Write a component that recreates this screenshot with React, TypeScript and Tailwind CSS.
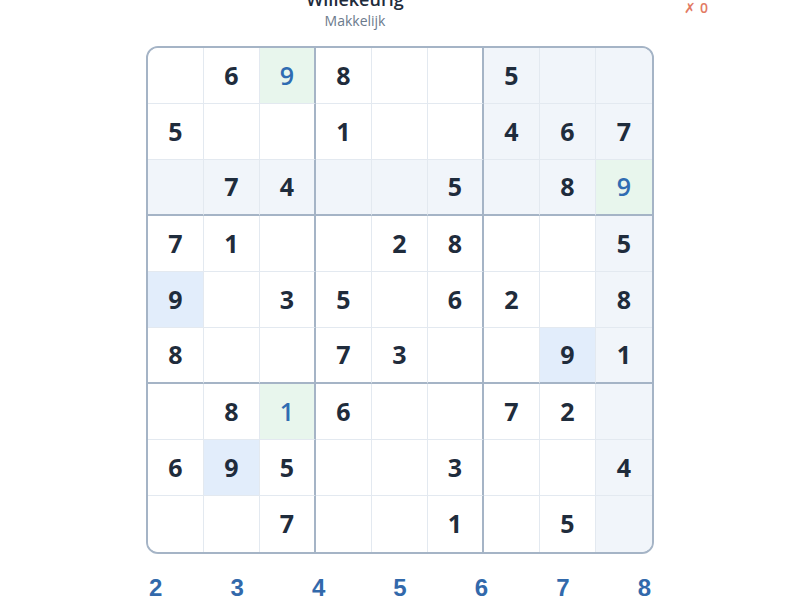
const puzzle: string[] = [
  ".698..5..",
  "5..1..467",
  ".74..5.89",
  "71..28..5",
  "9.35.62.8",
  "8..73..91",
  ".816..72.",
  "695..3..4",
  "..7..1.5.",
];

// cells the player filled in (shown in blue on green)
const filled = new Set(["0-2", "2-8", "6-2"]);
const selected = { r: 2, c: 8 };

function cellBg(r: number, c: number, v: string) {
  const key = `${r}-${c}`;
  if (filled.has(key)) return "bg-[#e8f6ed]";
  const selVal = puzzle[selected.r][selected.c];
  if (v !== "." && v === selVal) return "bg-[#e2edfb]";
  const sameBox =
    Math.floor(r / 3) === Math.floor(selected.r / 3) && Math.floor(c / 3) === Math.floor(selected.c / 3);
  if (r === selected.r || c === selected.c || sameBox) return "bg-[#f1f5fa]";
  return "bg-white";
}

function Cell({ r, c }: { r: number; c: number }) {
  const v = puzzle[r][c];
  const key = `${r}-${c}`;
  const right = c === 8 ? "" : c === 2 || c === 5 ? "border-r-2 border-r-[#a5b4c6]" : "border-r border-r-[#e3e9f0]";
  const bottom = r === 8 ? "" : r === 2 || r === 5 ? "border-b-2 border-b-[#a5b4c6]" : "border-b border-b-[#e3e9f0]";
  return (
    <div
      className={`flex h-14 w-14 items-center justify-center text-[25px] ${right} ${bottom} ${cellBg(r, c, v)} ${
        filled.has(key) ? "font-semibold text-[#2f6cb2]" : "font-bold text-[#1f2c3c]"
      }`}
    >
      {v === "." ? "" : v}
    </div>
  );
}

export default function App() {
  return (
    <div className="h-[600px] w-[800px] overflow-hidden bg-white" style={{ fontFamily: '"Open Sans", "Noto Sans", sans-serif' }}>
      <div className="-mt-[13px] flex items-start">
        <div className="w-[290px]" />
        <div className="w-[130px] text-center">
          <div className="text-lg font-semibold leading-6 text-[#1f2c3c]">Willekeurig</div>
          <div className="text-sm leading-5 text-[#6b7a8c]">Makkelijk</div>
        </div>
        <div className="flex-1" />
        <div className="mt-[13px] flex items-center gap-1 pr-[92px] text-sm font-semibold leading-4 text-[#e27a63]">
          <span className="font-normal">✗</span>
          <span>0</span>
        </div>
      </div>

      <div className="mt-[15px] flex justify-center">
        <div className="overflow-hidden rounded-xl border-2 border-[#a5b4c6]">
          <div className="grid grid-cols-9">
            {puzzle.map((row, r) => row.split("").map((_, c) => <Cell key={`${r}-${c}`} r={r} c={c} />))}
          </div>
        </div>
      </div>

      <div className="mx-auto mt-[18px] flex w-[502px] justify-between">
        {[2, 3, 4, 5, 6, 7, 8].map((n) => (
          <button
            key={n}
            className="text-2xl font-bold leading-8 text-[#3269ab]"
            style={{ fontFamily: '"Liberation Sans", Arial, sans-serif' }}
          >
            {n}
          </button>
        ))}
      </div>
    </div>
  );
}
